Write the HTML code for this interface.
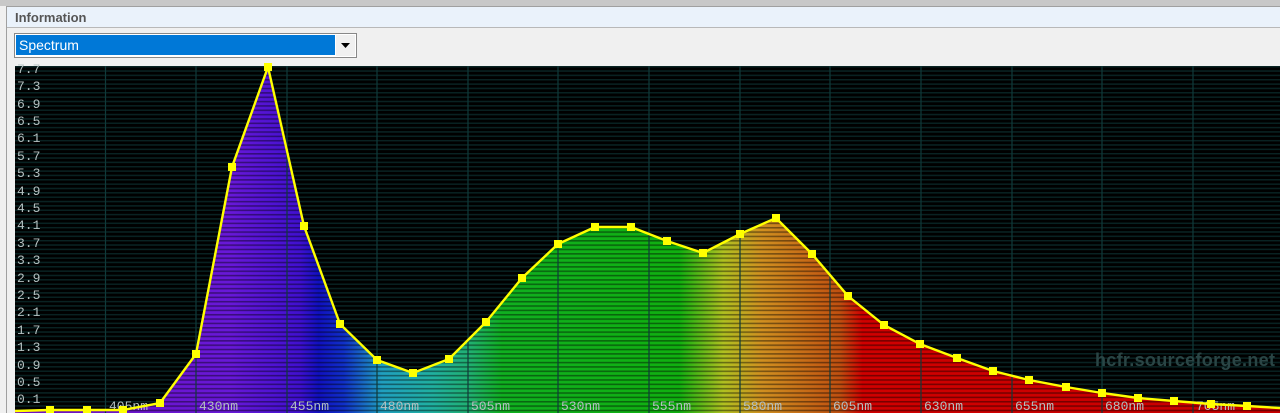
<!DOCTYPE html><html><head><style>
body{margin:0;width:1280px;height:413px;overflow:hidden;background:#f0f0f0;font-family:"Liberation Sans",sans-serif}
</style></head><body>
<svg width="1280" height="413" style="position:absolute;left:0;top:0" xmlns="http://www.w3.org/2000/svg">
<defs>
<linearGradient id="g" x1="15" x2="1280" y1="0" y2="0" gradientUnits="userSpaceOnUse">
<stop offset="0" stop-color="#7010c0"/>
<stop offset="0.17" stop-color="#6818d8"/>
<stop offset="0.225" stop-color="#4010d0"/>
<stop offset="0.24" stop-color="#1010c0"/>
<stop offset="0.26" stop-color="#1030c8"/>
<stop offset="0.29" stop-color="#20a0c0"/>
<stop offset="0.33" stop-color="#20b0a0"/>
<stop offset="0.36" stop-color="#20b070"/>
<stop offset="0.385" stop-color="#10b020"/>
<stop offset="0.525" stop-color="#10b010"/>
<stop offset="0.56" stop-color="#b0c020"/>
<stop offset="0.59" stop-color="#d09020"/>
<stop offset="0.652" stop-color="#c05010"/>
<stop offset="0.67" stop-color="#d00000"/>
<stop offset="1" stop-color="#c80000"/>
</linearGradient>
<pattern id="h" width="10" height="4.35" patternUnits="userSpaceOnUse" y="66">
<rect width="10" height="1.4" fill="#0f3c3c"/>
</pattern>
<pattern id="hf" width="10" height="4.35" patternUnits="userSpaceOnUse" y="66">
<rect width="10" height="1.6" fill="#000" fill-opacity="0.42"/>
</pattern>
</defs>
<rect x="0" y="0" width="1280" height="413" fill="#f0f0f0"/>
<rect x="0" y="0" width="1280" height="6" fill="#c8c8c8"/>
<rect x="6" y="6" width="1274" height="22" fill="#eaf2fb"/>
<line x1="6" y1="6.5" x2="1280" y2="6.5" stroke="#a0a0a0"/>
<line x1="6" y1="27.5" x2="1280" y2="27.5" stroke="#b8b8b8"/>
<line x1="6.5" y1="6" x2="6.5" y2="413" stroke="#a0a0a0"/>
<text x="15" y="22" font-size="13" font-weight="bold" fill="#555">Information</text>
<rect x="14.5" y="33.5" width="342" height="24" fill="#fff" stroke="#888"/>
<rect x="16" y="35" width="319" height="20" fill="#0078d7"/>
<text x="19" y="50" font-size="14" fill="#fff">Spectrum</text>
<rect x="336" y="35" width="19" height="21" fill="#f0f0f0"/>
<path d="M341 43h9l-4.5 5z" fill="#000"/>
<rect x="15" y="66" width="1265" height="347" fill="#000"/>
<rect x="15" y="66" width="1265" height="347" fill="url(#h)"/>
<polygon fill="url(#g)" points="15,411 50,410 87,410 123,410 160,403 196,354 232,167 268,67 304,226 340,324 377,360 413,373 449,359 486,322 522,278 558,244 595,227 631,227 667,241 703,253 740,234 776,218 812,254 848,296 884,325 920,344 957,358 993,371 1029,380 1066,387 1102,393 1138,398 1174,401 1211,404 1247,406 1280,408 1280,413 15,413"/>
<rect x="15" y="66" width="1265" height="347" fill="url(#hf)"/>
<g stroke="#0f3a3a" stroke-width="1.2">
<line x1="105.5" y1="66" x2="105.5" y2="413"/><line x1="196" y1="66" x2="196" y2="413"/><line x1="287" y1="66" x2="287" y2="413"/><line x1="377" y1="66" x2="377" y2="413"/><line x1="468" y1="66" x2="468" y2="413"/><line x1="558" y1="66" x2="558" y2="413"/><line x1="649" y1="66" x2="649" y2="413"/><line x1="740" y1="66" x2="740" y2="413"/><line x1="830" y1="66" x2="830" y2="413"/><line x1="921" y1="66" x2="921" y2="413"/><line x1="1012" y1="66" x2="1012" y2="413"/><line x1="1102" y1="66" x2="1102" y2="413"/><line x1="1193" y1="66" x2="1193" y2="413"/>
</g>
<g font-family="Liberation Mono,monospace" font-size="13" fill="#b4c0c0">
<text x="17" y="73">7.7</text><text x="17" y="90">7.3</text><text x="17" y="108">6.9</text><text x="17" y="125">6.5</text><text x="17" y="142">6.1</text><text x="17" y="160">5.7</text><text x="17" y="177">5.3</text><text x="17" y="195">4.9</text><text x="17" y="212">4.5</text><text x="17" y="229">4.1</text><text x="17" y="247">3.7</text><text x="17" y="264">3.3</text><text x="17" y="282">2.9</text><text x="17" y="299">2.5</text><text x="17" y="316">2.1</text><text x="17" y="334">1.7</text><text x="17" y="351">1.3</text><text x="17" y="369">0.9</text><text x="17" y="386">0.5</text><text x="17" y="403">0.1</text>
<text x="109" y="410">405nm</text><text x="199" y="410">430nm</text><text x="290" y="410">455nm</text><text x="380" y="410">480nm</text><text x="471" y="410">505nm</text><text x="561" y="410">530nm</text><text x="652" y="410">555nm</text><text x="743" y="410">580nm</text><text x="833" y="410">605nm</text><text x="924" y="410">630nm</text><text x="1015" y="410">655nm</text><text x="1105" y="410">680nm</text><text x="1196" y="410">705nm</text>
</g>
<text x="1095" y="366" font-size="18" font-weight="bold" fill="#2a4545" textLength="180">hcfr.sourceforge.net</text>
<polyline fill="none" stroke="#ffff00" stroke-width="2.4" points="15,411 50,410 87,410 123,410 160,403 196,354 232,167 268,67 304,226 340,324 377,360 413,373 449,359 486,322 522,278 558,244 595,227 631,227 667,241 703,253 740,234 776,218 812,254 848,296 884,325 920,344 957,358 993,371 1029,380 1066,387 1102,393 1138,398 1174,401 1211,404 1247,406 1280,408"/>
<g fill="#ffff00">
<rect x="46" y="406" width="8" height="8"/><rect x="83" y="406" width="8" height="8"/><rect x="119" y="406" width="8" height="8"/><rect x="156" y="399" width="8" height="8"/><rect x="192" y="350" width="8" height="8"/><rect x="228" y="163" width="8" height="8"/><rect x="264" y="63" width="8" height="8"/><rect x="300" y="222" width="8" height="8"/><rect x="336" y="320" width="8" height="8"/><rect x="373" y="356" width="8" height="8"/><rect x="409" y="369" width="8" height="8"/><rect x="445" y="355" width="8" height="8"/><rect x="482" y="318" width="8" height="8"/><rect x="518" y="274" width="8" height="8"/><rect x="554" y="240" width="8" height="8"/><rect x="591" y="223" width="8" height="8"/><rect x="627" y="223" width="8" height="8"/><rect x="663" y="237" width="8" height="8"/><rect x="699" y="249" width="8" height="8"/><rect x="736" y="230" width="8" height="8"/><rect x="772" y="214" width="8" height="8"/><rect x="808" y="250" width="8" height="8"/><rect x="844" y="292" width="8" height="8"/><rect x="880" y="321" width="8" height="8"/><rect x="916" y="340" width="8" height="8"/><rect x="953" y="354" width="8" height="8"/><rect x="989" y="367" width="8" height="8"/><rect x="1025" y="376" width="8" height="8"/><rect x="1062" y="383" width="8" height="8"/><rect x="1098" y="389" width="8" height="8"/><rect x="1134" y="394" width="8" height="8"/><rect x="1170" y="397" width="8" height="8"/><rect x="1207" y="400" width="8" height="8"/><rect x="1243" y="402" width="8" height="8"/>
</g>
</svg>
</body></html>
